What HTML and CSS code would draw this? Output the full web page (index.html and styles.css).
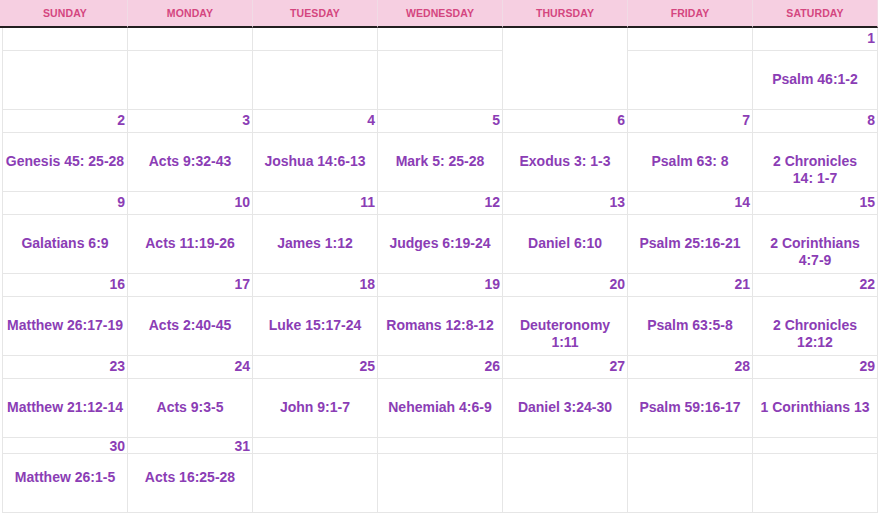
FILE: index.html
```html
<!DOCTYPE html>
<html>
<head>
<meta charset="utf-8">
<link rel="stylesheet" href="styles.css">
</head>
<body>
<div class="cal">
  <div class="hd">Sunday</div>
  <div class="hd">Monday</div>
  <div class="hd">Tuesday</div>
  <div class="hd">Wednesday</div>
  <div class="hd">Thursday</div>
  <div class="hd">Friday</div>
  <div class="hd">Saturday</div>

  <div class="dt"></div><div class="dt"></div><div class="dt"></div><div class="dt"></div><div class="merged"></div><div class="dt"></div><div class="dt">1</div>
  <div class="ct"></div><div class="ct"></div><div class="ct"></div><div class="ct"></div><div class="ct"></div><div class="ct">Psalm 46:1-2</div>

  <div class="dt">2</div><div class="dt">3</div><div class="dt">4</div><div class="dt">5</div><div class="dt">6</div><div class="dt">7</div><div class="dt">8</div>
  <div class="ct">Genesis 45: 25-28</div><div class="ct">Acts 9:32-43</div><div class="ct">Joshua 14:6-13</div><div class="ct">Mark 5: 25-28</div><div class="ct">Exodus 3: 1-3</div><div class="ct">Psalm 63: 8</div><div class="ct">2 Chronicles<br>14: 1-7</div>

  <div class="dt">9</div><div class="dt">10</div><div class="dt">11</div><div class="dt">12</div><div class="dt">13</div><div class="dt">14</div><div class="dt">15</div>
  <div class="ct">Galatians 6:9</div><div class="ct">Acts 11:19-26</div><div class="ct">James 1:12</div><div class="ct">Judges 6:19-24</div><div class="ct">Daniel 6:10</div><div class="ct">Psalm 25:16-21</div><div class="ct">2 Corinthians<br>4:7-9</div>

  <div class="dt">16</div><div class="dt">17</div><div class="dt">18</div><div class="dt">19</div><div class="dt">20</div><div class="dt">21</div><div class="dt">22</div>
  <div class="ct">Matthew 26:17-19</div><div class="ct">Acts 2:40-45</div><div class="ct">Luke 15:17-24</div><div class="ct">Romans 12:8-12</div><div class="ct">Deuteronomy<br>1:11</div><div class="ct">Psalm 63:5-8</div><div class="ct">2 Chronicles<br>12:12</div>

  <div class="dt">23</div><div class="dt">24</div><div class="dt">25</div><div class="dt">26</div><div class="dt">27</div><div class="dt">28</div><div class="dt">29</div>
  <div class="ct">Matthew 21:12-14</div><div class="ct">Acts 9:3-5</div><div class="ct">John 9:1-7</div><div class="ct">Nehemiah 4:6-9</div><div class="ct">Daniel 3:24-30</div><div class="ct">Psalm 59:16-17</div><div class="ct">1 Corinthians 13</div>

  <div class="dt last">30</div><div class="dt last">31</div><div class="dt last"></div><div class="dt last"></div><div class="dt last"></div><div class="dt last"></div><div class="dt last"></div>
  <div class="ct lastc">Matthew 26:1-5</div><div class="ct lastc">Acts 16:25-28</div><div class="ct"></div><div class="ct"></div><div class="ct"></div><div class="ct"></div><div class="ct"></div>
</div>
</body>
</html>
```
FILE: styles.css
```css
html, body {
  margin: 0;
  padding: 0;
  background: #ffffff;
}
body {
  font-family: "Liberation Sans", Arial, sans-serif;
}
.cal {
  display: grid;
  grid-template-columns: repeat(7, 125px);
  grid-template-rows: 28px 23px 59px 23px 59px 23px 59px 23px 59px 23px 59px 16px 59px;
  margin-left: 2px;
  border-left: 1px solid #e6e6e6;
  width: 875px;
}
.hd {
  background: #f6cfe1;
  color: #d4467f;
  font-size: 10.5px;
  font-weight: bold;
  text-transform: uppercase;
  letter-spacing: 0.1px;
  display: flex;
  align-items: center;
  justify-content: center;
  border-bottom: 2px solid #231f20;
  border-right: 1px solid #f1dbe5;
  padding-bottom: 1px;
  box-sizing: border-box;
}
.hd:first-child {
  margin-left: -3px;
  padding-left: 3px;
}
.dt, .ct, .merged {
  border-right: 1px solid #e6e6e6;
  border-bottom: 1px solid #e6e6e6;
  box-sizing: border-box;
  color: #8b3db5;
  font-weight: bold;
  font-size: 14px;
}
.dt {
  display: flex;
  align-items: center;
  justify-content: flex-end;
  padding: 0 2px 2px 0;
}
.dt.last {
  padding-bottom: 0;
}
.merged {
  grid-row: span 2;
}
.ct {
  text-align: center;
  line-height: 17px;
  white-space: nowrap;
  padding: 20px 0 0;
}
.ct.lastc {
  padding-top: 15px;
}
```
